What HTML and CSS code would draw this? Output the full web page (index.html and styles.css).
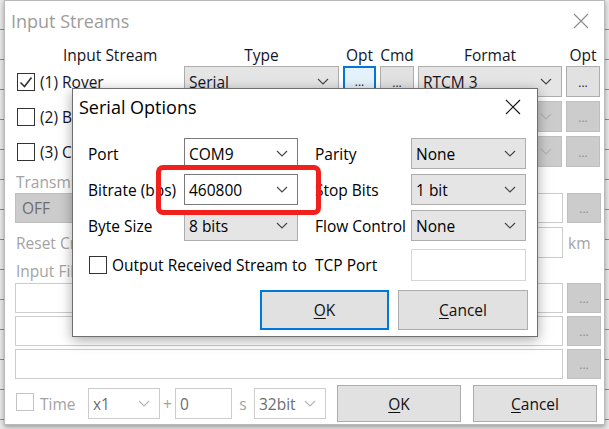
FILE: index.html
```html
<!DOCTYPE html>
<html>
<head>
<meta charset="utf-8">
<title>Input Streams</title>
<link rel="stylesheet" href="styles.css">
</head>
<body>
<div class="win main">
  <div class="titlebar">
    <span class="title">Input Streams</span>
    <svg class="xclose grey" viewBox="0 0 16 16"><path d="M1 1L15 15M15 1L1 15"/></svg>
  </div>
  <div class="client">
    <div class="row hdr">
      <div class="c1 hl">Input Stream</div>
      <div class="c2 hc">Type</div>
      <div class="c3 hc">Opt</div>
      <div class="c4 hc">Cmd</div>
      <div class="c5 hc">Format</div>
      <div class="c6 hc">Opt</div>
    </div>
    <div class="row sr">
      <div class="c1 chk"><svg class="cb" viewBox="0 0 18 18"><rect x="0.5" y="0.5" width="17" height="17"/><path class="tick" d="M3.5 9.5L7.5 13.5L14.5 4.5"/></svg>(1) Rover</div>
      <div class="c2 combo ro"><span>Serial</span><svg class="arr" viewBox="0 0 12 7"><path d="M1 1L6 6L11 1"/></svg></div>
      <div class="c3 btn focus">...</div>
      <div class="c4 btn">...</div>
      <div class="c5 combo ro"><span>RTCM 3</span><svg class="arr" viewBox="0 0 12 7"><path d="M1 1L6 6L11 1"/></svg></div>
      <div class="c6 btn">...</div>
    </div>
    <div class="row sr">
      <div class="c1 chk"><svg class="cb" viewBox="0 0 18 18"><rect x="0.5" y="0.5" width="17" height="17"/></svg>(2) Base</div>
      <div class="c2 combo dis"><span></span><svg class="arr" viewBox="0 0 12 7"><path d="M1 1L6 6L11 1"/></svg></div>
      <div class="c3 btn dis"></div>
      <div class="c4 btn dis"></div>
      <div class="c5 combo dis"><span></span><svg class="arr" viewBox="0 0 12 7"><path d="M1 1L6 6L11 1"/></svg></div>
      <div class="c6 btn dis">...</div>
    </div>
    <div class="row sr">
      <div class="c1 chk"><svg class="cb" viewBox="0 0 18 18"><rect x="0.5" y="0.5" width="17" height="17"/></svg>(3) Corr</div>
      <div class="c2 combo dis"><span></span><svg class="arr" viewBox="0 0 12 7"><path d="M1 1L6 6L11 1"/></svg></div>
      <div class="c3 btn dis"></div>
      <div class="c4 btn dis"></div>
      <div class="c5 combo dis"><span></span><svg class="arr" viewBox="0 0 12 7"><path d="M1 1L6 6L11 1"/></svg></div>
      <div class="c6 btn dis">...</div>
    </div>

    <div class="lblrow t1 muted">Transmit</div>
    <div class="row offrow">
      <div class="combo dis off"><span>OFF</span><svg class="arr" viewBox="0 0 12 7"><path d="M1 1L6 6L11 1"/></svg></div>
      <div class="edit dis grow"></div>
      <div class="edit dis grow"></div>
      <div class="edit dis grow"></div>
      <div class="c6 btn dis">...</div>
    </div>
    <div class="row resetrow">
      <span class="muted rlbl">Reset Cmd</span>
      <span class="grow"></span>
      <div class="edit dis km"></div>
      <span class="muted kmlbl">km</span>
    </div>
    <div class="lblrow t2 muted">Input File</div>
    <div class="files">
      <div class="row frow"><div class="edit dis grow"></div><div class="c6 btn dis">...</div></div>
      <div class="row frow"><div class="edit dis grow"></div><div class="c6 btn dis">...</div></div>
      <div class="row frow"><div class="edit dis grow"></div><div class="c6 btn dis">...</div></div>
    </div>
    <div class="row bottom">
      <svg class="cb light" viewBox="0 0 18 18"><rect x="0.5" y="0.5" width="17" height="17"/></svg>
      <span class="muted time">Time</span>
      <div class="combo light x1"><span>x1</span><svg class="arr" viewBox="0 0 12 7"><path d="M1 1L6 6L11 1"/></svg></div>
      <span class="muted plus">+</span>
      <div class="edit light zero">0</div>
      <span class="muted sec">s</span>
      <div class="combo light bits"><span>32bit</span><svg class="arr" viewBox="0 0 12 7"><path d="M1 1L6 6L11 1"/></svg></div>
      <div class="pbtn okb"><u>O</u>K</div>
      <div class="pbtn cancelb"><u>C</u>ancel</div>
    </div>
  </div>
</div>

<div class="win serial">
  <div class="stitle">
    <span>Serial Options</span>
    <svg class="xclose" viewBox="0 0 16 16"><path d="M1 1L15 15M15 1L1 15"/></svg>
  </div>
  <div class="sgrid">
    <span class="lbl">Port</span>
    <div class="combo ed"><span>COM9</span><svg class="arr" viewBox="0 0 12 7"><path d="M1 1L6 6L11 1"/></svg></div>
    <span class="lbl l2">Parity</span>
    <div class="combo ro"><span>None</span><svg class="arr" viewBox="0 0 12 7"><path d="M1 1L6 6L11 1"/></svg></div>

    <span class="lbl">Bitrate (bps)</span>
    <div class="combo ed"><span>460800</span><svg class="arr" viewBox="0 0 12 7"><path d="M1 1L6 6L11 1"/></svg></div>
    <span class="lbl l2">Stop Bits</span>
    <div class="combo ro"><span>1 bit</span><svg class="arr" viewBox="0 0 12 7"><path d="M1 1L6 6L11 1"/></svg></div>

    <span class="lbl">Byte Size</span>
    <div class="combo ro"><span>8 bits</span><svg class="arr" viewBox="0 0 12 7"><path d="M1 1L6 6L11 1"/></svg></div>
    <span class="lbl l2">Flow Control</span>
    <div class="combo ro"><span>None</span><svg class="arr" viewBox="0 0 12 7"><path d="M1 1L6 6L11 1"/></svg></div>
  </div>
  <div class="sgrid tcp">
    <div class="chk span2"><svg class="cb" viewBox="0 0 18 18"><rect x="0.5" y="0.5" width="17" height="17"/></svg>Output Received Stream to</div>
    <span class="lbl l2">TCP Port</span>
    <div class="edit tcpbox"></div>
  </div>
  <div class="sbtns">
    <div class="pbtn sok"><u>O</u>K</div>
    <div class="pbtn scancel"><u>C</u>ancel</div>
  </div>
</div>

<div class="mark"></div>
</body>
</html>
```

FILE: styles.css
```css
* { box-sizing: border-box; }
html, body { margin: 0; padding: 0; }
body {
  width: 609px;
  height: 429px;
  overflow: hidden;
  position: relative;
  background-color: #e9e9e9;
  background-image: repeating-linear-gradient(to bottom, transparent 0 29px, #8c8c8c 29px 30px);
  font-family: "Open Sans", "Noto Sans", sans-serif;
  font-size: 15.5px;
  color: #141428;
}

.win { position: absolute; background: #fff; }

/* main dialog */
.main {
  left: 4px;
  top: 0;
  width: 601px;
  height: 425px;
  border: 1px solid #b9b9b9;
  box-shadow: 0 2px 5px rgba(0,0,0,.35);
  display: flex;
  flex-direction: column;
}
.titlebar {
  height: 40px;
  flex: none;
  display: flex;
  align-items: center;
  justify-content: space-between;
  padding: 0 15px 0 6px;
}
.title { font-size: 18px; color: #9c9c9c; line-height: 1; }
.xclose { width: 16px; height: 16px; fill: none; stroke: #111; stroke-width: 1.1; }
.xclose.grey { stroke: #8a8a8a; }

.client {
  display: flex;
  flex-direction: column;
  padding: 3px 3px 0 10px;
}
.row { display: flex; gap: 4px; align-items: center; }
.c1 { width: 165px; flex: none; }
.c2 { width: 155px; flex: none; }
.c3 { width: 33px; flex: none; }
.c4 { width: 34px; flex: none; }
.c5 { width: 144px; flex: none; }
.c6 { width: 34px; flex: none; }
.grow { flex: 1; min-width: 0; }

.hdr { height: 22px; }
.hl { padding-left: 48px; }
.hc { text-align: center; white-space: nowrap; }
.sr { height: 31px; margin-bottom: 4px; }
.sr > * { height: 31px; }

.chk { display: flex; align-items: center; gap: 5px; white-space: nowrap; padding-left: 2px; }
.cb { width: 18px; height: 18px; flex: none; }
.cb rect { fill: #fff; stroke: #333; stroke-width: 1; }
.cb .tick { fill: none; stroke: #333; stroke-width: 1.6; }
.cb.light rect { stroke: #c4c4c4; }

.combo {
  display: flex;
  align-items: center;
  justify-content: space-between;
  padding: 0 9px 0 4px;
  border: 1px solid #adadad;
  background: #e5e5e5;
  white-space: nowrap;
  overflow: hidden;
}
.combo.ed { background: #fff; border-color: #7a7a7a; }
.combo.dis { background: #cccccc; border-color: #bfbfbf; color: #6d6d6d; }
.combo.light { background: #fff; border-color: #cccccc; color: #6d6d6d; }
.arr { width: 12px; height: 7px; flex: none; fill: none; stroke: #444; stroke-width: 1.1; }
.combo.dis .arr, .combo.light .arr { stroke: #b4b4b4; }

.btn {
  display: flex;
  align-items: flex-end;
  justify-content: center;
  padding-bottom: 7px;
  border: 1px solid #adadad;
  background: #e1e1e1;
  font-size: 12px;
  line-height: 1;
  color: #222;
}
.btn.focus { border: 2px solid #0078d7; background: #e5f1fb; }
.btn.dis { background: #cccccc; border-color: #bfbfbf; color: #8c8c8c; }

.edit { border: 1px solid #7a7a7a; background: #fff; display: flex; align-items: center; padding-left: 4px; }
.edit.dis { border-color: #cccccc; }
.edit.light { border-color: #cccccc; color: #6d6d6d; }

.muted { color: #a3a3a3; white-space: nowrap; }
.lblrow { height: 20px; line-height: 20px; padding-left: 1px; }
.t1 { margin-top: 1px; }
.offrow { height: 30px; margin-top: 1px; }
.offrow > * { height: 30px; }
.off { width: 155px; flex: none; padding-left: 6px; }
.resetrow { height: 31px; margin-top: 4px; gap: 4px; }
.rlbl { padding-left: 1px; }
.km { width: 130px; height: 31px; }
.kmlbl { width: 34px; padding-left: 1px; }
.t2 { margin-top: 3px; }
.files { display: flex; flex-direction: column; gap: 3px; margin-top: 2px; }
.frow { height: 30px; }
.frow > * { height: 30px; }

.bottom { height: 37px; margin-top: 6px; gap: 0; }
.bottom .cb { margin-left: 1px; margin-bottom: 4px; }
.time { margin-left: 6px; width: 48px; }
.x1 { width: 72px; height: 31px; }
.plus { width: 15px; text-align: center; }
.zero { width: 57px; height: 31px; }
.sec { width: 22px; text-align: center; }
.bits { width: 72px; height: 31px; }

.pbtn {
  display: flex;
  align-items: center;
  justify-content: center;
  border: 1px solid #adadad;
  background: #e1e1e1;
  color: #111;
}
.pbtn u { text-decoration-thickness: 1px; text-underline-offset: 2px; }
.okb { width: 124px; height: 37px; margin-left: 11px; }
.cancelb { width: 124px; height: 37px; margin-left: 12px; }

/* serial options dialog */
.serial {
  left: 72px;
  top: 88px;
  width: 466px;
  height: 249px;
  border: 1px solid #6f6f6f;
  box-shadow: 0 3px 12px rgba(0,0,0,.35);
  color: #000;
  display: flex;
  flex-direction: column;
}
.stitle {
  height: 36px;
  flex: none;
  display: flex;
  align-items: center;
  justify-content: space-between;
  padding: 0 16px 0 6px;
  font-size: 18px;
}
.sgrid {
  display: grid;
  grid-template-columns: 96px 114px 113px 115px;
  grid-auto-rows: 31px;
  row-gap: 5px;
  align-items: center;
  padding-left: 15px;
  margin-top: 13px;
}
.sgrid > .combo { height: 31px; }
.lbl { white-space: nowrap; }
.l2 { padding-left: 17px; }
.sgrid.tcp { margin-top: 8px; grid-auto-rows: 32px; }
.span2 { grid-column: span 2; padding-left: 1px; }
.tcpbox { height: 32px; border-color: #d5d5d5; }
.sbtns { display: flex; justify-content: flex-end; gap: 9px; padding-right: 9px; margin-top: 9px; }
.sok { width: 129px; height: 40px; border: 2px solid #0078d7; }
.scancel { width: 130px; height: 40px; }

/* annotation */
.mark {
  position: absolute;
  left: 156px;
  top: 165px;
  width: 165px;
  height: 50px;
  border: 5px solid #f2201c;
  border-radius: 7px;
}
```
